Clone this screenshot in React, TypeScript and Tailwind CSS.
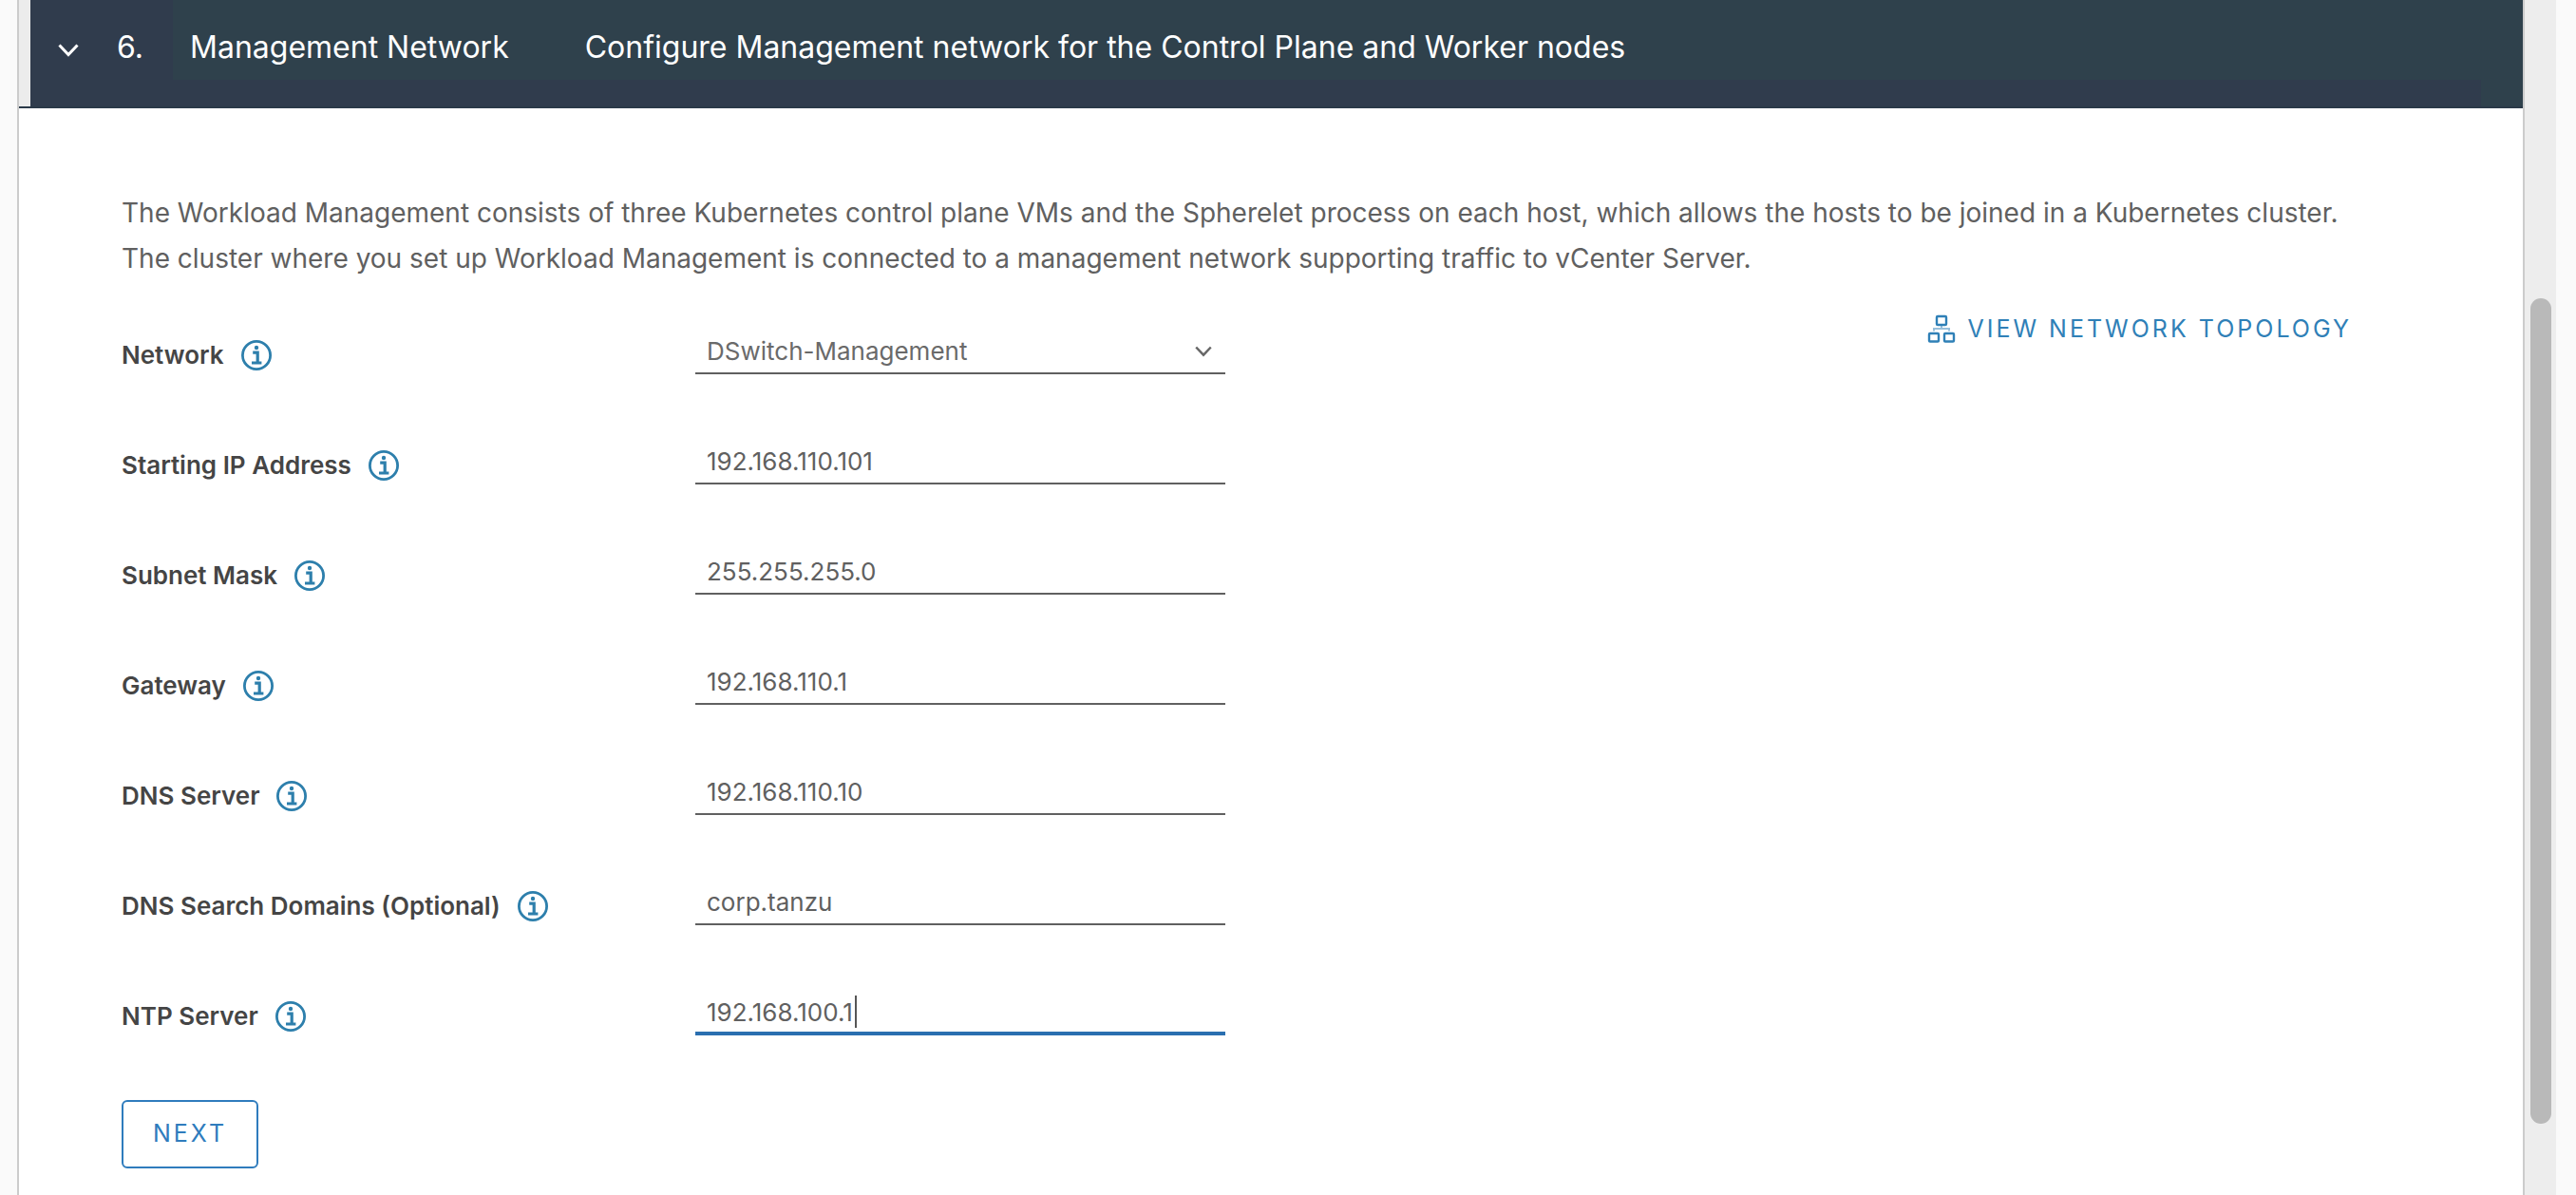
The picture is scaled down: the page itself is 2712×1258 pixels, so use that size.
type Field = { id: string; label: string; value: string; active?: boolean };

const fields: Field[] = [
  { id: 'starting-ip', label: 'Starting IP Address', value: '192.168.110.101' },
  { id: 'subnet-mask', label: 'Subnet Mask', value: '255.255.255.0' },
  { id: 'gateway', label: 'Gateway', value: '192.168.110.1' },
  { id: 'dns-server', label: 'DNS Server', value: '192.168.110.10' },
  { id: 'dns-search', label: 'DNS Search Domains (Optional)', value: 'corp.tanzu' },
  { id: 'ntp-server', label: 'NTP Server', value: '192.168.100.1', active: true },
];

function Chevron({ className }: { className: string }) {
  return (
    <svg viewBox="0 0 22 14" fill="none" stroke="currentColor" strokeWidth="3" className={className} aria-hidden="true">
      <path d="M1.5 1.5 11 11.5 20.5 1.5" />
    </svg>
  );
}

function InfoIcon() {
  return (
    <svg viewBox="0 0 32 32" className="size-8" aria-hidden="true">
      <circle cx="16" cy="16" r="14.6" fill="none" stroke="currentColor" strokeWidth="2.8" />
      <circle cx="16" cy="8" r="2.2" fill="currentColor" />
      <path d="M12.2 13.2h5v10M11 24h10.4" fill="none" stroke="currentColor" strokeWidth="3.2" />
    </svg>
  );
}

function TopologyIcon() {
  return (
    <svg viewBox="0 0 30 30" fill="none" stroke="currentColor" className="size-[30px]" aria-hidden="true">
      <rect x="10" y="2" width="10" height="9" rx="1" strokeWidth="2.4" />
      <rect x="2" y="20" width="10" height="8.5" rx="1" strokeWidth="2.4" />
      <rect x="18" y="20" width="10" height="8.5" rx="1" strokeWidth="2.4" />
      <path d="M15 12v3M7 17.5v-2.5h16v2.5" strokeWidth="2" opacity="0.5" />
    </svg>
  );
}

function FieldLabel({ id, label }: { id: string; label: string }) {
  return (
    <div className="flex h-12 w-[604px] items-center gap-[18px] pt-2">
      <label htmlFor={id} className="text-[26px] leading-8 font-semibold text-[#454545]">
        {label}
      </label>
      <button type="button" aria-label={`About ${label}`} className="text-[#2d7fac]">
        <InfoIcon />
      </button>
    </div>
  );
}

function TextField({ id, label, value, active }: Field) {
  return (
    <div className="flex">
      <FieldLabel id={id} label={label} />
      <div className="relative w-[558px]">
        <input
          id={id}
          type="text"
          defaultValue={value}
          className={
            active
              ? 'h-12 w-full border-b-2 border-[#2a6fb0] px-3 text-[26px] text-[#606060] shadow-[inset_0_-2px_0_#2a6fb0] outline-none'
              : 'h-12 w-full border-b-2 border-[#606060] px-3 text-[26px] text-[#606060] outline-none'
          }
        />
        {active && <span className="absolute top-1.5 left-42 h-[34px] w-0.5 bg-[#565656]" />}
      </div>
    </div>
  );
}

export default function App() {
  return (
    <div className="flex min-h-screen bg-[#fafafa] pr-[21px] pl-[18px] font-[Inter,sans-serif] text-[#606060]">
      <main className="flex-1 border-x-2 border-[#cccccc] bg-white">
        <header className="border-b-2 border-[#2b3a49] bg-[#ececec] pl-3 text-[32px] leading-10 text-white">
          <div className="flex bg-[#303c4d]">
            <button
              type="button"
              aria-label="Collapse section"
              className="flex w-[150px] items-start gap-10 pt-[30px] pl-[29px]"
            >
              <Chevron className="mt-4 h-3.5 w-[22px]" />
              <span>6.</span>
            </button>
            <div className="flex-1 pb-7">
              <div className="flex gap-20 bg-[#2f414c] pt-[30px] pb-3.5 pl-[18px]">
                <h2>Management Network</h2>
                <p>Configure Management network for the Control Plane and Worker nodes</p>
              </div>
            </div>
            <div className="w-11 bg-[#2f414c]" />
          </div>
        </header>

        <section className="px-27 pt-[86px] pb-7">
          <p className="text-[28px] leading-12">
            The Workload Management consists of three Kubernetes control plane VMs and the Spherelet process on each host,
            which allows the hosts to be joined in a Kubernetes cluster.
            <br />
            The cluster where you set up Workload Management is connected to a management network supporting traffic to
            vCenter Server.
          </p>

          <form className="mt-[34px]">
            <div className="flex items-start justify-between pr-[72px]">
              <div className="flex flex-col gap-17 pt-4">
                <div className="flex">
                  <FieldLabel id="network" label="Network" />
                  <div className="relative w-[558px]">
                    <select
                      id="network"
                      defaultValue="DSwitch-Management"
                      className="h-12 w-full appearance-none border-b-2 border-[#606060] px-3 text-[26px] text-[#6a6a6a] outline-none"
                    >
                      <option>DSwitch-Management</option>
                    </select>
                    <Chevron className="pointer-events-none absolute top-[18px] right-3.5 h-3 w-[18px] text-[#666666]" />
                  </div>
                </div>
                {fields.map((field) => (
                  <TextField key={field.id} {...field} />
                ))}
              </div>
              <a href="#topology" className="flex items-center gap-3 text-[25px] leading-8 tracking-[3px] text-[#2f80b7]">
                <TopologyIcon />
                VIEW NETWORK TOPOLOGY
              </a>
            </div>
            <button
              type="button"
              className="mt-17 h-[72px] w-36 rounded-md border-2 border-[#2f7cbd] text-[25px] tracking-[3px] text-[#2f7cbd]"
            >
              NEXT
            </button>
          </form>
        </section>
      </main>

      <div className="flex w-[33px] flex-col bg-[#ededed] pr-[5px] pl-1.5" aria-hidden="true">
        <div className="flex-[314]" />
        <div className="flex-[869] rounded-full bg-[#b9b9b9]" />
        <div className="flex-[75]" />
      </div>
    </div>
  );
}
